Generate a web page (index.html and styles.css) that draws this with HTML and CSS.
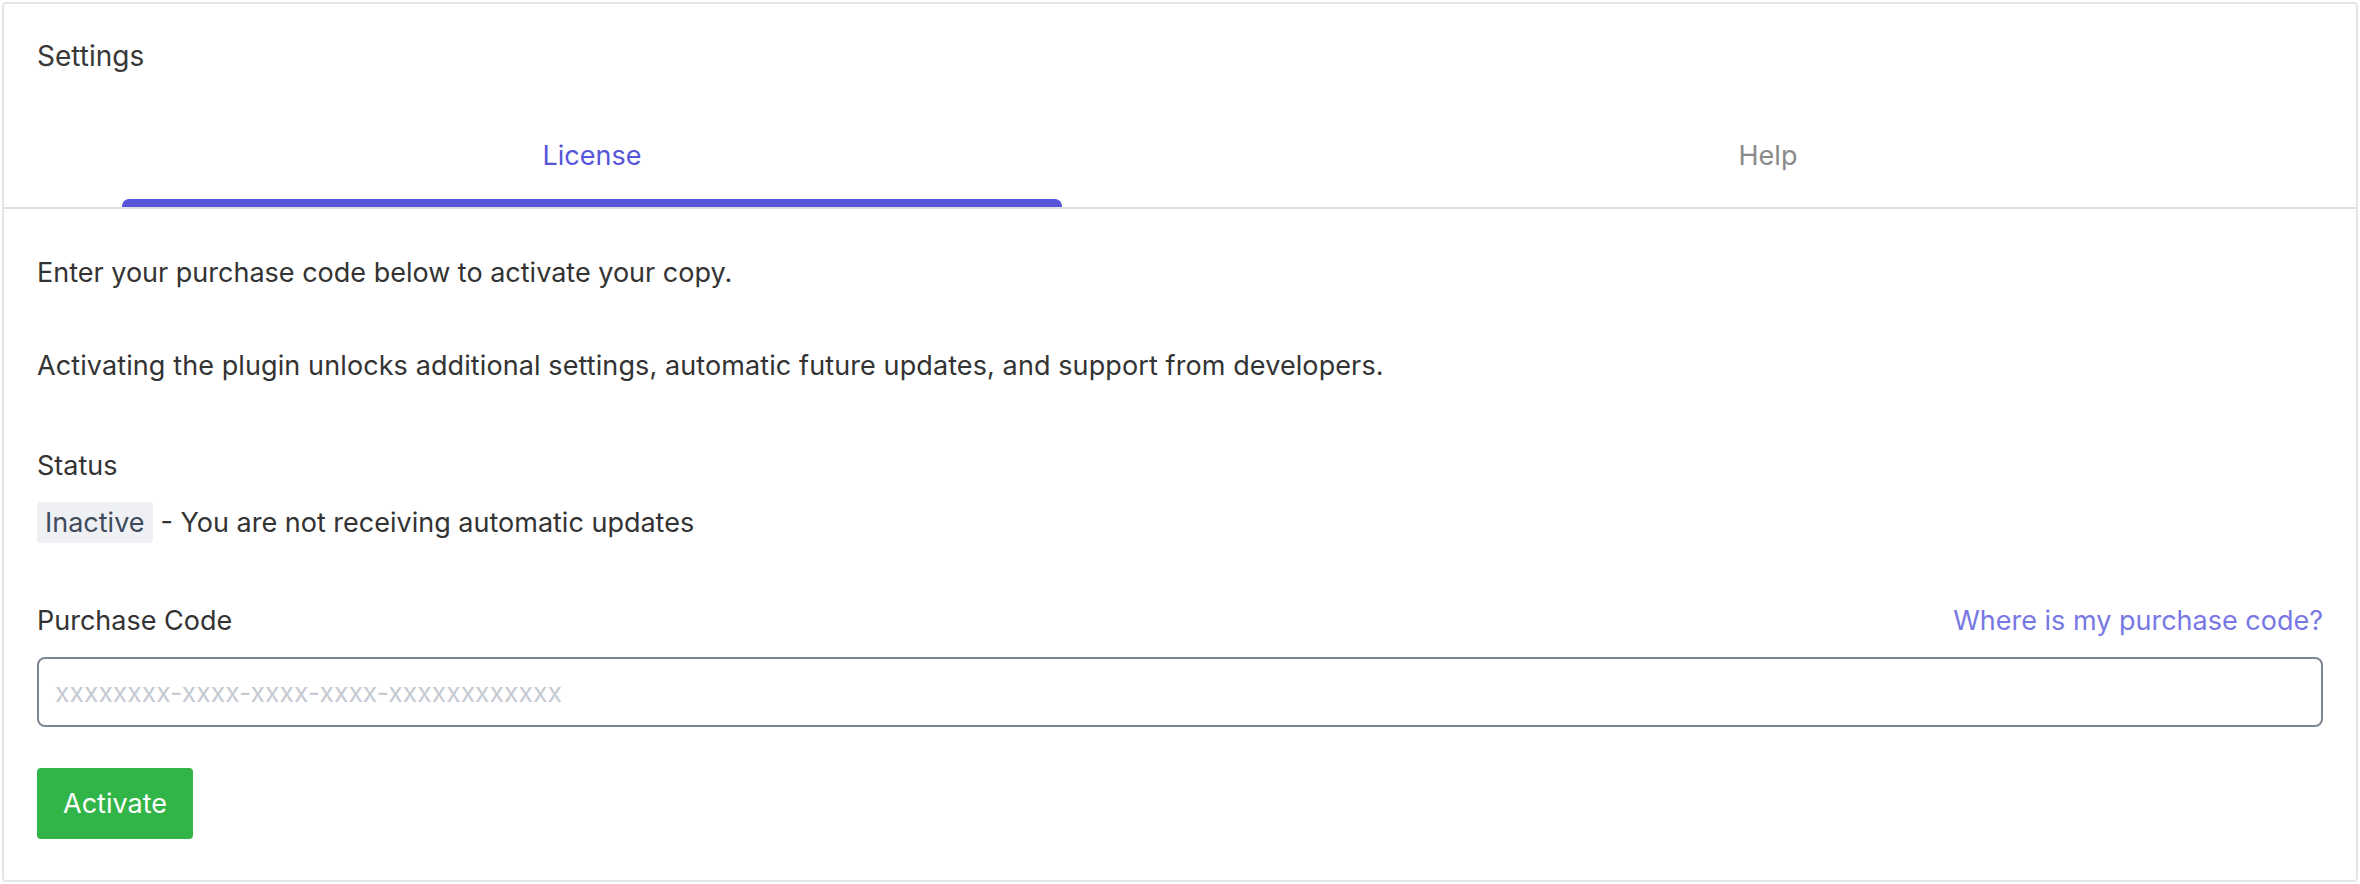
FILE: index.html
```html
<!DOCTYPE html>
<html>
<head lang="en">
    <meta charset="UTF-8">
    <title>Settings</title>
    <link rel="stylesheet" href="styles.css">
</head>
<body>
  <div class="card">
      <div class="card-head">Settings</div>
      <ul class="tabs">
          <li class="tab selected"><span>License</span><i class="bar"></i></li>
          <li class="tab"><span>Help</span><i class="bar"></i></li>
      </ul>
      <div class="card-body">
          <p class="intro">Enter your purchase code below to activate your copy.</p>
          <p class="intro second">Activating the plugin unlocks additional settings, automatic future updates, and support from developers.</p>

          <div class="label status-label">Status</div>
          <div class="status">
              <span class="badge">Inactive</span>
              <span class="status-text">- You are not receiving automatic updates</span>
          </div>

          <div class="code-row">
              <label class="label" for="code">Purchase Code</label>
              <a href="#" class="help-link">Where is my purchase code?</a>
          </div>
          <input id="code" class="code-input" type="text" placeholder="xxxxxxxx-xxxx-xxxx-xxxx-xxxxxxxxxxxx">
          <button class="btn-activate">Activate</button>
      </div>
  </div>
</body>
</html>
```
FILE: styles.css
```css
*{
    margin: 0;
    padding: 0;
    box-sizing: border-box;
}
ul{
    list-style: none;
}
a{
    text-decoration: none;
}
body{
    padding: 2px;
    background: #fff;
    font-family: Inter, "Liberation Sans", sans-serif;
    color: #333;
}
.card{
    border: 2px solid #e2e5e9;
    border-radius: 4px;
    background: #fff;
}
.card-head{
    padding: 31px 33px 0;
    font-size: 28px;
    line-height: 42px;
    color: #383838;
}
.tabs{
    display: flex;
    border-bottom: 2px solid #dde1e6;
}
.tab{
    flex: 1;
    display: flex;
    flex-direction: column;
    align-items: center;
    padding-top: 61px;
    font-size: 27px;
    line-height: 36px;
    color: #8a8a8a;
    cursor: pointer;
}
.tab .bar{
    display: block;
    width: 80%;
    height: 8px;
    margin-top: 25px;
    border-radius: 7px 7px 0 0;
}
.tab.selected{
    color: #5755d8;
}
.tab.selected .bar{
    background: #5856d8;
}
.card-body{
    padding: 46px 33px 41px;
    font-size: 27px;
    line-height: 36px;
}
.intro.second{
    margin-top: 57px;
    letter-spacing: 0.1px;
}
.status-label{
    margin-top: 64px;
}
.status{
    display: flex;
    align-items: center;
    margin-top: 18px;
}
.badge{
    padding: 3px 8px 2px;
    border-radius: 4px;
    background: #eef0f4;
    color: #3f4b5c;
}
.status-text{
    margin-left: 8px;
}
.code-row{
    display: flex;
    justify-content: space-between;
    margin-top: 60px;
}
.help-link{
    color: #7878e4;
}
.code-input{
    display: block;
    width: 100%;
    height: 70px;
    margin-top: 18px;
    padding: 0 16px;
    border: 2px solid #7c8793;
    border-radius: 8px;
    font-family: inherit;
    font-size: 26.5px;
    color: #333;
    outline: none;
}
.code-input::placeholder{
    color: #c6cbd3;
}
.btn-activate{
    display: block;
    margin-top: 41px;
    width: 156px;
    height: 71px;
    border: 0;
    border-radius: 4px;
    background: #32b548;
    color: #fff;
    font-family: inherit;
    font-size: 27px;
    cursor: pointer;
}
```
